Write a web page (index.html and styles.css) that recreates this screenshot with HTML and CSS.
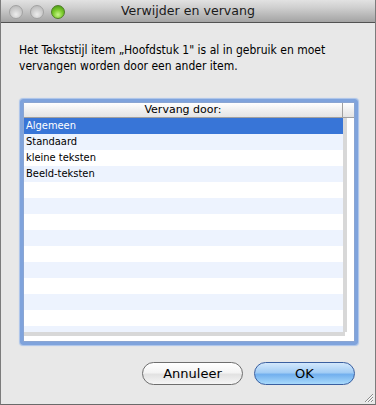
FILE: index.html
```html
<!DOCTYPE html>
<html>
<head>
<meta charset="utf-8">
<link rel="stylesheet" href="styles.css">
</head>
<body>
<div class="window">
  <div class="titlebar">
    <div class="lights">
      <span class="light gray"></span>
      <span class="light gray"></span>
      <span class="light green"></span>
    </div>
    <div class="title">Verwijder en vervang</div>
  </div>
  <div class="content">
    <p class="message">Het Tekststijl item „Hoofdstuk 1" is al in gebruik en moet vervangen worden door een ander item.</p>
    <div class="ring">
      <div class="frame">
        <div class="header">
          <div class="hcol">Vervang door:</div>
          <div class="hcorner"></div>
        </div>
        <div class="body">
          <div class="listwrap">
            <div class="rows">
              <div class="row sel">Algemeen</div>
              <div class="row alt">Standaard</div>
              <div class="row">kleine teksten</div>
              <div class="row alt">Beeld-teksten</div>
              <div class="row"></div>
              <div class="row alt"></div>
              <div class="row"></div>
              <div class="row alt"></div>
              <div class="row"></div>
              <div class="row alt"></div>
              <div class="row"></div>
              <div class="row alt"></div>
              <div class="row"></div>
              <div class="row alt"></div>
            </div>
            <div class="vstrip"></div>
          </div>
          <div class="hstrip"></div>
        </div>
      </div>
    </div>
    <div class="buttons">
      <button class="btn cancel">Annuleer</button>
      <button class="btn ok">OK</button>
    </div>
  </div>
  <svg class="grip" width="11" height="11" viewBox="0 0 11 11">
    <path d="M10 2 L2 10 M10 5 L5 10 M10 8 L8 10" stroke="#8c8c8c" stroke-width="1"/>
    <path d="M10 3 L3 10 M10 6 L6 10 M10 9 L9 10" stroke="#fafafa" stroke-width="1"/>
  </svg>
</div>
</body>
</html>
```
FILE: styles.css
```css
* { box-sizing: border-box; }
html, body { margin: 0; padding: 0; }
body {
  width: 376px;
  height: 405px;
  overflow: hidden;
  font-family: "DejaVu Sans", "Liberation Sans", sans-serif;
  background: #e8e8e8;
}
.window {
  position: relative;
  width: 376px;
  height: 405px;
  background: #e8e8e8;
  border-left: 1px solid #7c7c7c;
  border-right: 1px solid #7c7c7c;
  border-bottom: 1px solid #6a6a6a;
  display: flex;
  flex-direction: column;
}
.titlebar {
  height: 23px;
  flex: none;
  display: flex;
  align-items: center;
  background: linear-gradient(#e2e2e2 0%, #cfcfcf 35%, #b4b4b4 75%, #a4a4a4 100%);
  border-bottom: 1px solid #525252;
  position: relative;
}
.lights {
  display: flex;
  gap: 7px;
  padding-left: 8px;
  padding-top: 2px;
}
.light {
  width: 14px;
  height: 14px;
  border-radius: 50%;
  display: block;
}
.light.gray {
  background: radial-gradient(circle at 50% 70%, #ececec 0%, #d0d0d0 45%, #b2b2b2 100%);
  border: 1px solid #a2a2a2;
}
.light.green {
  background: radial-gradient(circle at 50% 72%, #c8f58a 0%, #7dcc2e 45%, #3f8c0e 100%);
  border: 1px solid #4f7f27;
}
.title {
  position: absolute;
  left: 0;
  right: 0;
  top: 3px;
  text-align: center;
  font-size: 12.6px;
  color: #1a1a1a;
}
.content {
  flex: 1;
  display: flex;
  flex-direction: column;
  padding: 19px 18px 0 18px;
}
.message {
  margin: 0;
  font-family: "DejaVu Sans Condensed", "DejaVu Sans", sans-serif;
  font-stretch: condensed;
  font-size: 12px;
  line-height: 16px;
  color: #000;
  width: 330px;
}
.ring {
  margin-top: 25px;
  margin-left: 1px;
  width: 338px;
  height: 246px;
  border: 3px solid #7fa3dc;
  border-radius: 3px;
  box-shadow: 0 0 1px 1px #a9c3ea;
}
.frame {
  width: 100%;
  height: 100%;
  background: #fff;
  display: flex;
  flex-direction: column;
  border: 1px solid #8aa5d2;
}
.header {
  height: 15px;
  flex: none;
  display: flex;
  background: linear-gradient(#ffffff, #f0f0f0 50%, #e4e4e4);
  border-bottom: 1px solid #a0a0a0;
}
.hcol {
  flex: 1;
  text-align: center;
  font-size: 11px;
  line-height: 14px;
  color: #000;
  border-right: 1px solid #a0a0a0;
}
.hcorner { width: 11px; }
.body {
  flex: 1;
  display: flex;
  flex-direction: column;
  overflow: hidden;
}
.listwrap {
  height: 214px;
  display: flex;
}
.rows {
  flex: 1;
  overflow: hidden;
}
.row {
  height: 16px;
  font-family: "DejaVu Sans Condensed", "DejaVu Sans", sans-serif;
  font-stretch: condensed;
  font-size: 11px;
  line-height: 16px;
  padding-left: 2px;
  color: #000;
  background: #fff;
}
.row.alt { background: #edf3fe; }
.row.sel { background: #3875d7; color: #fff; }
.vstrip {
  width: 11px;
  background: #fff;
  border-left: 4px solid #d8d8d8;
}
.hstrip {
  height: 4px;
  width: 321px;
  background: #d8d8d8;
}
.buttons {
  display: flex;
  justify-content: flex-end;
  gap: 11px;
  margin-top: 17px;
  padding-right: 2px;
}
.btn {
  width: 101px;
  height: 23px;
  border-radius: 12px;
  font-family: "DejaVu Sans", "Liberation Sans", sans-serif;
  font-size: 13px;
  color: #000;
  padding: 0;
  line-height: 20px;
}
.btn.cancel {
  border: 1px solid #6e6e6e;
  background: linear-gradient(#ffffff 0%, #f4f4f4 45%, #e2e2e2 55%, #f6f6f6 100%);
}
.btn.ok {
  border: 1px solid #3a5fa0;
  background: linear-gradient(#d3e8fc 0%, #a3cdf5 45%, #72b0ee 55%, #a9dafc 100%);
}
.grip {
  position: absolute;
  right: 1px;
  bottom: 1px;
}
```
